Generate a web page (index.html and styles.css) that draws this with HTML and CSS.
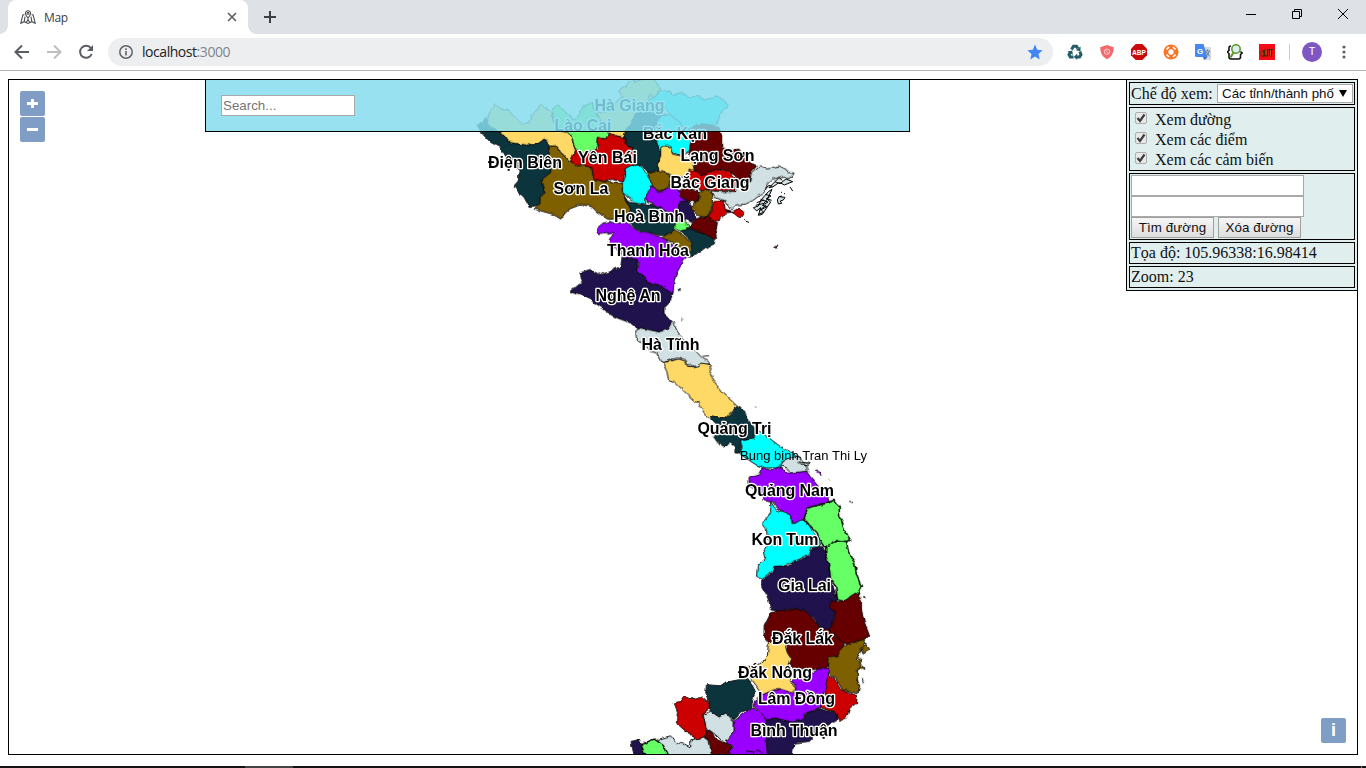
FILE: index.html
```html
<!DOCTYPE html>
<html lang="vi">
<head>
<meta charset="utf-8">
<title>Map</title>
<link rel="stylesheet" href="styles.css">
</head>
<body>
<div class="window">
<header class="tabstrip">
  <div class="tab">
    <svg class="favicon" width="16" height="16" viewBox="0 0 16 16"><g fill="none" stroke="#4b4f52" stroke-width="1.1"><path d="M5.500 5a2.600 2.600 0 1 1 5 0c-.3 1.500-2.500 4-2.500 4S5.800 6.500 5.500 5zM4.300 5.500 2.800 6.200.800 14.300l3.400-1.600L8 14.500l3.800-1.800 3.400 1.600-2-8.100-1.500-.7M4.200 12.700l.8-5M11.800 12.700l-.8-5M6.200 13.500 8 10.500l1.800 3M8 9v1.500"/><circle cx="8" cy="4.200" r="1"/></g></svg>
    <span class="tab-title">Map</span>
    <svg class="close" width="10" height="10" viewBox="0 0 10 10"><path d="M1 1l8 8M9 1L1 9" stroke="#5f6368" stroke-width="1.700"/></svg>
  </div>
  <svg class="plus" width="12" height="12" viewBox="0 0 12 12"><path d="M6 0v12M0 6h12" stroke="#3c4043" stroke-width="2"/></svg>
  <div class="wincontrols">
    <svg width="10" height="10" viewBox="0 0 10 10"><path d="M0 5.500h10" stroke="#000"/></svg>
    <svg width="10" height="10" viewBox="0 0 10 10"><path d="M.5 2.500h7v7h-7zM2.500 2.500v-2h7v7h-2" fill="none" stroke="#000"/></svg>
    <svg width="10" height="10" viewBox="0 0 10 10"><path d="M0 0l10 10M10 0L0 10" stroke="#000"/></svg>
  </div>
</header>
<nav class="toolbar">
  <svg class="nav" width="16" height="16" viewBox="0 0 16 16"><path d="M15 8H2M8 1.500L1.500 8 8 14.500" fill="none" stroke="#5a5e63" stroke-width="2"/></svg>
  <svg class="nav" width="16" height="16" viewBox="0 0 16 16"><path d="M1 8h13M8 1.500L14.500 8 8 14.500" fill="none" stroke="#bcbec0" stroke-width="2"/></svg>
  <svg class="nav" width="16" height="16" viewBox="0 0 16 16"><path d="M13 4.300A6 6 0 1 0 13.700 10" fill="none" stroke="#5a5e63" stroke-width="2"/><path d="M15 1v6H9z" fill="#5a5e63"/></svg>
  <div class="omnibox">
    <svg width="14" height="14" viewBox="0 0 14 14"><circle cx="7" cy="7" r="6.200" fill="none" stroke="#5f6368" stroke-width="1.500"/><path d="M7 6v4.500M7 3.300v1.600" stroke="#5f6368" stroke-width="1.600"/></svg>
    <span class="url">localhost<span class="port">:3000</span></span>
    <svg class="star" width="16" height="16" viewBox="0 0 16 16"><path d="M8 .5l2.200 5.200 5.400.5-4.100 3.700 1.200 5.500L8 12.500l-4.700 2.900 1.200-5.500L.4 6.200l5.400-.5z" fill="#4285f4"/></svg>
  </div>
  <div class="extensions">
    <svg width="16" height="16" viewBox="0 0 16 16"><g fill="none" stroke="#245d66" stroke-width="3"><path d="M4.500 5.500l2-3.300h3l1.300 2.300M12.800 7.500l1.200 3-1.500 2.500H9.500M6.500 13H3.300L2 10.500 3.500 8"/></g><path d="M13.500 2.500v4.700l-4.700-1zM10.200 9.500V16l-3.500-3zM.300 7.500l5-1 .5 4.500z" fill="#245d66"/></svg>
    <svg width="16" height="16" viewBox="0 0 16 16"><path d="M8 1l6.800 2.300C14.700 9 12.500 13 8 15.200 3.500 13 1.300 9 1.200 3.300z" fill="#f3696c"/><circle cx="8" cy="7.700" r="2.700" fill="none" stroke="#fbd0d0" stroke-width="1"/><path d="M6.200 6l3.600 3.500" stroke="#fbd0d0"/></svg>
    <svg width="16" height="16" viewBox="0 0 16 16"><path d="M4.700 0h6.600L16 4.700v6.600L11.300 16H4.700L0 11.300V4.700z" fill="#c80b0b"/><text x="8" y="11" class="abp" textLength="14" lengthAdjust="spacingAndGlyphs">ABP</text></svg>
    <svg width="16" height="16" viewBox="0 0 16 16"><circle cx="8" cy="8" r="7.500" fill="#fb7423"/><circle cx="8" cy="8" r="2.700" fill="#fff"/><path d="M3.500 5.500L6 3M10 3l2.500 2.500M12.500 10.500L10 13M6 13l-2.500-2.500" stroke="#fff" stroke-width="1.700" fill="none"/></svg>
    <svg width="16" height="16" viewBox="0 0 16 16"><path d="M6 3h10v13H8z" fill="#d9dadd"/><path d="M0 0h8.500l4 13H1.500Q0 13 0 11.500z" fill="#4688f4"/><path d="M8 13h4.500L9.500 16z" fill="#3367d6"/><text x="2" y="9.500" class="gtrans">G</text><path d="M10.500 7H15M12.500 5.500V7m1.800.2q-.5 3-3 5M11.300 8l3.500 4.500" stroke="#607d8b" fill="none"/></svg>
    <svg width="16" height="16" viewBox="0 0 16 16"><path d="M4 2Q2 2 2 4v2.500L.5 8 2 9.500V13q0 2 2 2M4 15h8M11.500 15q2 0 2-2v-2.500L15 9l-1.500-1.500" fill="none" stroke="#111" stroke-width="1.600"/><circle cx="9" cy="5" r="4.200" fill="#ddedf1" stroke="#5c9a2d" stroke-width="1.600"/><path d="M6.500 8.500L3.500 13.500" stroke="#5c9a2d" stroke-width="2.200"/></svg>
    <svg width="16" height="16" viewBox="0 0 16 16"><path d="M0 0h16v16H0z" fill="#f50b15"/><path d="M2 8.500l3-2v5.500H2.500zM6 5.500V12h2.500V5M10.500 12V5M9 5.500h5M12.500 5v8" fill="none" stroke="#3a2a00" stroke-width="1.100"/><path d="M3 7.500v4M7 6v5M11.500 6v6" stroke="#a27b14" stroke-width=".7"/></svg>
  </div>
  <i class="divider"></i>
  <span class="avatar">T</span>
  <svg class="menu" width="4" height="14" viewBox="0 0 4 14"><g fill="#5f6368"><circle cx="2" cy="2" r="1.600"/><circle cx="2" cy="7" r="1.600"/><circle cx="2" cy="12" r="1.600"/></g></svg>
</nav>
<main class="map">
<svg class="canvas" width="1348" height="674" viewBox="9 80 1348 674">
<defs><filter id="coast" filterUnits="userSpaceOnUse" x="400" y="60" width="560" height="720" color-interpolation-filters="sRGB"><feTurbulence type="fractalNoise" baseFrequency=".16" numOctaves="2" seed="4"/><feDisplacementMap in="SourceGraphic" scale="4" xChannelSelector="R" yChannelSelector="G"/></filter></defs>
<g transform="translate(-.9 -.3)">
<g filter="url(#coast)" class="regions">
<g transform="translate(470 76) scale(.33333)">
<path class="c-yellow" d="M60 105 78 88 100 100 120 105 135 125 160 145 180 140 190 115 205 100 215 85 235 100 245 105 250 125 262 150 280 168 300 170 317 215 312 262 300 255 280 230 262 212 240 210 232 196 205 205 175 210 150 208 120 200 105 180 80 165 55 140Z"/>
<path class="c-teal" d="M25 150 40 135 50 125 60 145 80 165 105 180 120 200 150 205 175 208 205 205 225 190 238 210 240 235 275 262 240 300 220 312 232 350 205 390 180 392 165 365 145 345 135 330 148 315 150 280 120 260 95 215 65 200 40 175Z"/>
<path class="c-brown" d="M240 213 262 210 275 230 300 255 320 265 370 272 370 300 400 318 460 325 460 345 470 370 485 400 480 420 440 430 415 430 385 410 370 395 340 385 305 398 290 410 275 430 250 415 195 400 210 385 210 365 225 350 220 310 245 290 245 270 265 262 240 240Z"/>
<path class="c-yellow" d="M450 45 480 20 510 14 530 5 560 15 575 40 560 60 540 60 530 90 500 115 490 140 470 165 465 185 440 180 415 165 390 130 385 110 430 105 440 80 460 65Z"/>
<path class="c-green" d="M250 100 265 88 295 115 320 132 340 92 370 80 375 110 395 130 410 160 420 180 410 190 385 185 380 220 360 230 330 237 318 215 305 180 290 165 255 150Z"/>
<path class="c-red" d="M385 185 410 190 420 170 440 180 463 185 470 210 490 215 495 240 490 265 470 275 462 320 430 310 410 318 375 310 368 275 345 270 320 270 305 255 318 225 330 235 360 230 385 222Z"/>
<path class="c-teal" d="M500 115 545 108 575 120 580 140 567 160 565 190 590 218 565 260 570 290 540 293 520 270 490 265 495 240 490 215 470 210 465 185 470 165 490 140Z"/>
<path class="c-teal" d="M465 365 485 380 530 388 560 390 615 420 625 440 615 465 590 480 540 475 500 460 480 440 480 420 485 400Z"/>
<path class="c-cyan" d="M468 278 495 265 520 275 535 300 550 325 545 350 530 365 530 385 495 378 460 350 460 325 470 300Z"/>
</g>
<g transform="translate(640 76) scale(.33333)">
<path class="c-cyan" d="M50 60 60 45 75 42 100 55 130 50 150 65 175 58 200 75 225 62 250 68 268 85 250 105 240 125 235 145 200 150 165 155 150 160 130 150 110 130 95 118 80 100 45 112 20 108 20 80Z"/>
<path class="c-cyan" d="M70 115 95 118 110 130 130 150 150 165 155 200 150 228 130 240 100 230 95 240 60 225 50 200 57 165 55 140Z"/>
<path class="c-maroon" d="M165 150 200 145 240 155 248 180 248 215 275 225 300 220 325 255 352 272 335 290 335 318 300 318 280 290 250 280 220 290 190 300 165 280 168 255 150 235 155 200 150 170Z"/>
<path class="c-yellow" d="M65 215 80 207 95 215 100 235 125 240 160 260 165 280 145 300 130 308 100 300 60 285 55 265 65 240Z"/>
<path class="c-brown" d="M25 290 50 288 70 285 95 300 90 330 65 350 45 340 35 315Z"/>
<path class="c-red" d="M150 280 170 285 190 300 220 285 250 282 275 290 290 318 290 345 250 348 215 340 190 345 160 335 140 320 145 300Z"/>
<path class="c-purple" d="M35 330 60 350 90 335 120 345 125 365 150 378 120 378 118 400 130 440 105 420 60 395 25 380 22 360Z"/>
<path class="c-maroon" d="M120 345 140 335 180 350 180 370 165 380 125 365Z"/>
<path class="c-brown" d="M180 350 200 340 215 345 220 370 220 400 200 425 180 420 160 400 165 380 180 370Z"/>
<path class="c-navy" d="M120 378 150 375 160 400 172 430 155 440 135 430 118 405Z"/>
<path class="c-light" d="M215 345 250 348 290 347 290 320 335 318 340 290 365 270 385 280 420 270 440 280 445 290 465 292 460 305 430 305 400 310 385 325 375 350 340 375 320 385 290 388 275 400 258 375 225 365Z"/>
<path class="c-red" d="M225 378 255 375 258 400 280 408 260 412 240 435 210 430 205 420 222 400ZM258 405 283 406 300 397 315 410 303 427 283 412Z"/>
<path class="c-green" d="M110 440 130 432 155 455 130 468 105 460Z"/>
<path class="c-maroon" d="M160 440 180 425 210 425 235 440 230 470 232 490 205 480 180 465 155 460ZM404 514 416 511 411 521Z"/>
<path class="c-teal" d="M125 465 155 460 190 470 228 492 225 505 200 515 165 540 148 545 158 520 155 495Z"/>
</g>
<g transform="translate(560 215) scale(.33333)">
<path class="c-purple" d="M112 45 135 25 150 20 165 25 200 25 240 50 300 65 330 85 360 110 385 125 375 135 350 180 345 200 342 235 320 225 290 208 265 205 260 190 235 170 240 145 215 128 190 125 150 80 165 52 120 60Z"/>
<path class="c-brown" d="M325 58 345 48 370 60 398 83 395 110 375 125 355 103 340 83 305 70Z"/>
<path class="c-navy" d="M62 175 95 165 125 180 155 170 185 155 190 125 235 135 235 170 258 190 265 205 310 215 342 235 330 265 315 280 315 300 338 318 325 345 300 352 270 345 240 345 215 325 175 310 155 300 130 280 100 260 75 240 55 240 33 230 50 215 70 200ZM355 225l10-3-6 7M345 320l3 5M366 313l4 3"/>
<path class="c-light" d="M230 348 245 340 270 345 300 352 325 345 340 320 355 350 375 375 400 400 430 430 455 448 410 455 385 450 380 435 355 430 310 445 295 415 270 410 265 395 232 375ZM430 425l20-2"/>
</g>
<g transform="translate(650 340) scale(.33333)">
<path class="c-yellow" d="M40 68 60 65 90 58 110 65 115 80 150 82 155 70 187 75 180 95 192 120 217 155 265 200 247 215 230 235 195 230 175 232 155 205 148 185 140 188 100 150 75 125 58 118 53 95Z"/>
<path class="c-teal" d="M264 200 287 212 292 235 317 265 315 295 275 300 275 340 258 340 258 320 242 305 235 320 218 322 203 305 193 290 203 260 183 240 188 228 230 237ZM318 201l3 2"/>
<path class="c-cyan" d="M315 295 320 268 340 280 360 295 400 325 438 345 452 355 400 362 395 385 345 385 320 375 290 355 275 345 280 325 273 300Z"/>
<path class="c-light" d="M405 360 438 350 455 360 470 375 476 395 425 403 415 385 395 378ZM440 352l15 5-5 13 30-3-5 8-20-2"/>
</g>
<g transform="translate(730 450) scale(.33333)">
<path class="c-purple" d="M60 85 92 75 100 55 130 62 150 50 175 70 232 65 247 85 272 115 292 140 304 155 270 165 235 175 225 205 210 222 190 220 185 200 160 185 145 175 130 155 105 150 95 125 60 110ZM260 64l14 2 2 9M299 89l2 2"/>
<path class="c-cyan" d="M125 155 140 180 180 195 190 222 222 210 240 225 250 245 268 265 272 290 245 292 240 310 200 335 175 340 165 350 135 350 130 365 100 385 82 380 85 350 110 325 105 300 120 275 110 235 100 220 125 190Z"/>
<path class="c-navy" d="M250 295 280 290 290 310 300 350 305 390 325 450 322 475 315 500 300 540 270 530 255 505 225 482 180 478 150 485 125 480 120 455 110 430 98 410 98 390 130 370 135 350 170 348 205 335 240 315Z"/>
<path class="c-green heavy" d="M235 175 300 158 315 152 330 170 332 200 347 240 362 270 345 280 325 268 300 290 285 290 270 270 265 250 240 225 225 208ZM361 155l4 0M368 160l4-2"/>
<path class="c-green heavy" d="M290 290 330 272 352 275 357 300 377 340 382 375 397 410 382 440 345 455 325 450 320 410 305 390 300 350 290 320ZM385 355v2M404 440l4 4"/>
</g>
<g transform="translate(730 590) scale(.33333)">
<path class="c-maroon" d="M125 70 150 62 180 60 225 60 250 85 270 110 300 120 320 140 345 150 340 175 325 200 300 205 290 235 250 240 190 235 175 215 185 205 170 190 175 170 165 160 120 160 105 140 105 110Z"/>
<path class="c-maroon" d="M325 40 350 30 380 10 397 30 397 60 407 100 422 140 385 155 350 165 335 150 300 120 315 85 320 65 300 45 305 30Z"/>
<path class="c-brown" d="M407 148 385 155 340 170 325 200 298 205 295 225 300 250 320 265 340 300 387 312 392 290 385 270 385 240 397 225 382 210 397 180 402 165ZM395 175l15-15 12 20-20 13ZM385 205l14 8-8 10M388 235l14-5 2 10M400 265l3 15M402 20l5 4"/>
<path class="c-purple" d="M190 270 240 255 270 238 298 235 298 260 290 290 280 330 275 355 230 370 225 385 190 398 140 385 110 388 75 350 75 335 100 315 135 300 160 300 200 310 200 295Z"/>
<path class="c-yellow" d="M118 158 165 155 175 190 185 205 175 225 185 240 180 265 200 300 190 310 160 300 135 300 100 315 80 285 60 260 60 230 90 225 115 200Z"/>
<path class="c-red" d="M298 255 315 265 335 300 384 318 382 340 362 355 352 385 335 392 310 365 275 352 290 320 290 285Z"/>
<path class="c-navy" d="M110 388 140 385 190 398 225 385 235 368 275 358 320 370 327 390 290 410 240 455 195 460 188 505 110 505 105 440Z"/>
</g>
<g transform="translate(620 660) scale(.33333)">
<path class="c-purple" d="M380 155 405 145 438 175 445 300 320 300 340 258 320 250 325 235 345 215 345 185ZM378 283l5-10 25 5 8-8 15 12"/>
<path class="c-teal" d="M262 75 300 78 320 68 385 55 400 75 410 95 400 120 400 145 370 155 345 180 320 160 300 175 275 160 270 135 260 100Z"/>
<path class="c-red" d="M165 130 183 125 195 108 230 118 250 112 265 125 272 145 250 165 262 205 255 235 225 240 215 218 200 215 172 190 175 155Z"/>
<path class="c-light" d="M252 165 275 155 300 172 320 160 345 185 345 215 325 240 310 245 290 225 262 205Z"/>
<path class="c-light" d="M115 240 155 228 175 255 185 248 215 262 215 240 255 232 275 245 278 300 145 300Z"/>
<path class="c-maroon" d="M262 210 275 215 295 240 335 258 330 300 280 300 270 240 258 232Z"/>
<path class="c-green heavy" d="M65 255 105 238 130 255 152 300 85 300Z"/>
<path class="c-navy" d="M36 245 62 240 66 260 85 300 48 300Z"/>
</g>
</g>
</g>
<g class="islands" transform="translate(640 76) scale(.33333)"><path d="M340 395 355 390 363 372 385 347 396 340 382 370 392 378 367 415 355 418 362 395 350 405ZM347 388 372 382 387 362M350 380l22-8M362 370l22 8-17 10 14 4-18 9 8 8-14 5M376 355l17 5-14 8 16 5M358 405l20-18M387 335l18-18 15 6 18-14 20 8-25 10-15-8-20 14ZM376 340l10-12 12 3M405 317l12-12 10 8M412 372l5-10 18 2-5 8-9 3 4 7-10 2ZM418 362l8-2M423 350l3-2M432 352l3 2M450 333l8 12M313 430l3 3M318 436l9 3"/></g>
<g class="labels">
<text x="629.500" y="111" textLength="70">Hà Giang</text><text x="583" y="131" textLength="57">Lào Cai</text><text x="675" y="139" textLength="64">Bắc Kạn</text><text x="525" y="168" textLength="74">Điện Biên</text><text x="607.500" y="163" textLength="59">Yên Bái</text><text x="717.500" y="161" textLength="74">Lạng Sơn</text><text x="581" y="194" textLength="55">Sơn La</text><text x="710" y="188" textLength="79">Bắc Giang</text><text x="649" y="222" textLength="70">Hoà Bình</text><text x="648" y="256" textLength="82">Thanh Hóa</text><text x="628" y="301" textLength="65">Nghệ An</text><text x="670.500" y="350" textLength="58">Hà Tĩnh</text><text x="734.500" y="434" textLength="74">Quảng Trị</text><text x="789.500" y="496" textLength="89">Quảng Nam</text><text x="785" y="545" textLength="67">Kon Tum</text><text x="804.500" y="591" textLength="53">Gia Lai</text><text x="802.500" y="644" textLength="61">Đắk Lắk</text><text x="775" y="678" textLength="74">Đắk Nông</text><text x="796.500" y="704" textLength="77">Lâm Đồng</text><text x="794" y="736" textLength="87">Bình Thuận</text>
<text class="poi" x="803.500" y="459.500" textLength="127">Bung binh Tran Thi Ly</text>
</g>
</svg>
<div class="zoomer"><button class="mapbtn"><svg width="11" height="11" viewBox="0 0 11 11"><path d="M5.500 1v9M0 5.500h11" stroke="#fff" stroke-width="3"/></svg></button><button class="mapbtn"><svg width="11" height="11" viewBox="0 0 11 11"><path d="M0 5.500h11" stroke="#fff" stroke-width="3"/></svg></button></div>
<div class="searchbar"><input class="search" type="text" placeholder="Search..."></div>
<aside class="panel">
  <div class="box row1"><span>Chế độ xem:</span><div class="select"><span>Các tỉnh/thành phố</span><svg width="8" height="7" viewBox="0 0 8 7"><path d="M0 0h8L4 7z"/></svg></div></div>
  <div class="box checks">
    <label><svg class="check" viewBox="0 0 10 10"><path d="M1.500 5l2.500 3L8.500 1.500" fill="none" stroke="#3c3c3c" stroke-width="2.200"/></svg>Xem đường</label>
    <label><svg class="check" viewBox="0 0 10 10"><path d="M1.500 5l2.500 3L8.500 1.500" fill="none" stroke="#3c3c3c" stroke-width="2.200"/></svg>Xem các điểm</label>
    <label><svg class="check" viewBox="0 0 10 10"><path d="M1.500 5l2.500 3L8.500 1.500" fill="none" stroke="#3c3c3c" stroke-width="2.200"/></svg>Xem các cảm biến</label>
  </div>
  <div class="box route"><input class="point"><input class="point"><div class="actions"><button class="action">Tìm đường</button><button class="action">Xóa đường</button></div></div>
  <div class="box line">Tọa độ: 105.96338:16.98414</div>
  <div class="box line">Zoom: 23</div>
</aside>
<button class="mapbtn info">i</button>
</main>
<footer class="taskbar"><i class="active"></i><i class="edge"></i></footer>
</div>
</body>
</html>
```
FILE: styles.css
```css
* { box-sizing: border-box; }
body { margin: 0; background: #fff; overflow: hidden; font-family: "Liberation Serif", "Times New Roman", serif; font-size: 16px; color: #111; }
svg { display: block; flex: none; }
.window { width: 1366px; height: 768px; display: flex; flex-direction: column; }
.tabstrip { height: 34px; flex: none; background: #dee1e6; display: flex; padding-left: 8px; }
.tab { width: 240px; height: 34px; background: #fff; border-radius: 8px 8px 0 0; display: flex; align-items: center; padding: 0 11px 0 12px; position: relative; }
.tab::before, .tab::after { content: ""; position: absolute; bottom: 0; width: 8px; height: 8px; }
.tab::before { left: -8px; background: radial-gradient(circle at 0 0, #dee1e6 7.5px, #fff 8px); }
.tab::after { right: -8px; background: radial-gradient(circle at 100% 0, #dee1e6 7.5px, #fff 8px); }
.tab-title { margin-left: 8px; font: 12px "Open Sans", sans-serif; letter-spacing: -.3px; color: #3c4043; flex: 1; }
.plus { margin: 11px 0 0 16px; }
.wincontrols { margin: 9px 18px 0 auto; display: flex; gap: 36px; }
.toolbar { height: 37px; flex: none; border-bottom: 1px solid #b5b5b5; display: flex; align-items: center; padding-left: 14px; }
.nav { margin-right: 16px; }
.omnibox { margin-left: -2px; width: 945px; height: 28px; border-radius: 14px; background: #edeef0; display: flex; align-items: center; padding: 0 10px 0 11px; }
.url { font: 14px/20px "Open Sans", sans-serif; letter-spacing: -.45px; color: #202124; margin-left: 9px; margin-top: -1px; flex: 1; }
.port { color: #80868b; }
.extensions { display: flex; gap: 16px; margin-left: 14px; }
.abp { font: bold 7px "Liberation Sans", sans-serif; fill: #fff; text-anchor: middle; }
.gtrans { font: bold 8px "Liberation Sans", sans-serif; fill: #fff; }
.divider { width: 1px; height: 16px; background: #ccc; margin: 0 12px 0 14px; }
.avatar { width: 20px; height: 20px; border-radius: 50%; background: #7e57c2; color: #fff; font: 11px/20px Roboto, sans-serif; text-align: center; }
.menu { margin-left: 20px; }
.map { position: relative; margin: 8px 8px 0; height: 676px; flex: none; border: 1px solid #000; background: #fff; overflow: hidden; }
.regions path { stroke: #080808; stroke-width: 2.8; }
.regions .heavy { stroke-width: 4.5; }
.islands path { fill: #d0e0e3; stroke: #000; stroke-width: 3; }
.c-yellow { fill: #ffd966; } .c-teal { fill: #0c343d; } .c-brown { fill: #7f6000; } .c-green { fill: #66ff66; }
.c-red { fill: #cc0000; } .c-cyan { fill: #00ffff; } .c-maroon { fill: #660000; } .c-purple { fill: #9900ff; }
.c-navy { fill: #20124d; } .c-light { fill: #d0e0e3; }
.labels text { font: bold 16px "Liberation Sans", Arial, sans-serif; text-anchor: middle; stroke: #fff; stroke-width: 2.6px; stroke-linejoin: round; paint-order: stroke; }
.labels .poi { font-weight: normal; font-size: 13px; stroke: none; }
.zoomer { position: absolute; left: 11px; top: 11px; display: grid; gap: 1px; }
.mapbtn { border: 0; padding: 0; width: 25px; height: 25px; border-radius: 2px; background: #7f9dc5; color: #fff; display: flex; align-items: center; justify-content: center; }
.info { position: absolute; right: 11px; bottom: 11px; font: bold 18px "Liberation Sans", sans-serif; }
.searchbar { position: absolute; left: 196px; top: -1px; width: 705px; height: 53px; border: 1px solid #000; background: rgba(134, 220, 237, .85); padding: 15px; }
.search { display: block; width: 134px; height: 21px; border: 1px solid #a9a9a9; padding: 1px; background: #fff; font: 13.33px "Liberation Sans", sans-serif; }
.search::placeholder { color: #757575; }
.panel { position: absolute; right: -1px; top: -1px; width: 232px; height: 212px; border: 1px solid #000; background: #e0eeee; padding: 2px; display: flex; flex-direction: column; gap: 2px; }
.box { border: 1px solid #000; padding: 1px; flex: none; width: 226px; }
.row1 { height: 23px; display: flex; align-items: center; justify-content: space-between; white-space: nowrap; }
.select { width: 136px; height: 19px; background: #fff; border: 1px solid #a9a9a9; display: flex; align-items: center; justify-content: space-between; padding: 0 5px 0 4px; font: 13.33px "Liberation Sans", sans-serif; letter-spacing: 0; }
.checks { height: 64px; padding-top: 2px; }
.checks label { height: 20px; display: flex; align-items: center; gap: 8px; padding-left: 4px; }
.check { width: 12px; height: 12px; margin-top: -4px; border: 1px solid #adadad; border-radius: 2px; background: #e8e8e8; }
.route { height: 67px; }
.point { display: block; width: 173px; height: 21px; border: 1px solid #a9a9a9; background: #fff; padding: 1px; }
.actions { display: flex; gap: 4px; }
.action { width: 83px; height: 21px; border: 1px solid #a0a0a0; border-radius: 0; padding: 0; background: linear-gradient(#f6f6f6, #dedede); color: #111; font: 13.33px "Liberation Sans", sans-serif; letter-spacing: .1px; white-space: nowrap; }
.line { height: 22px; line-height: 18px; }
.taskbar { margin-top: auto; height: 2px; background: #151113; display: flex; }
.active { width: 48px; margin-left: 245px; background: #444; }
.edge { width: 1px; margin-left: auto; margin-right: 4px; background: #777; }
```
